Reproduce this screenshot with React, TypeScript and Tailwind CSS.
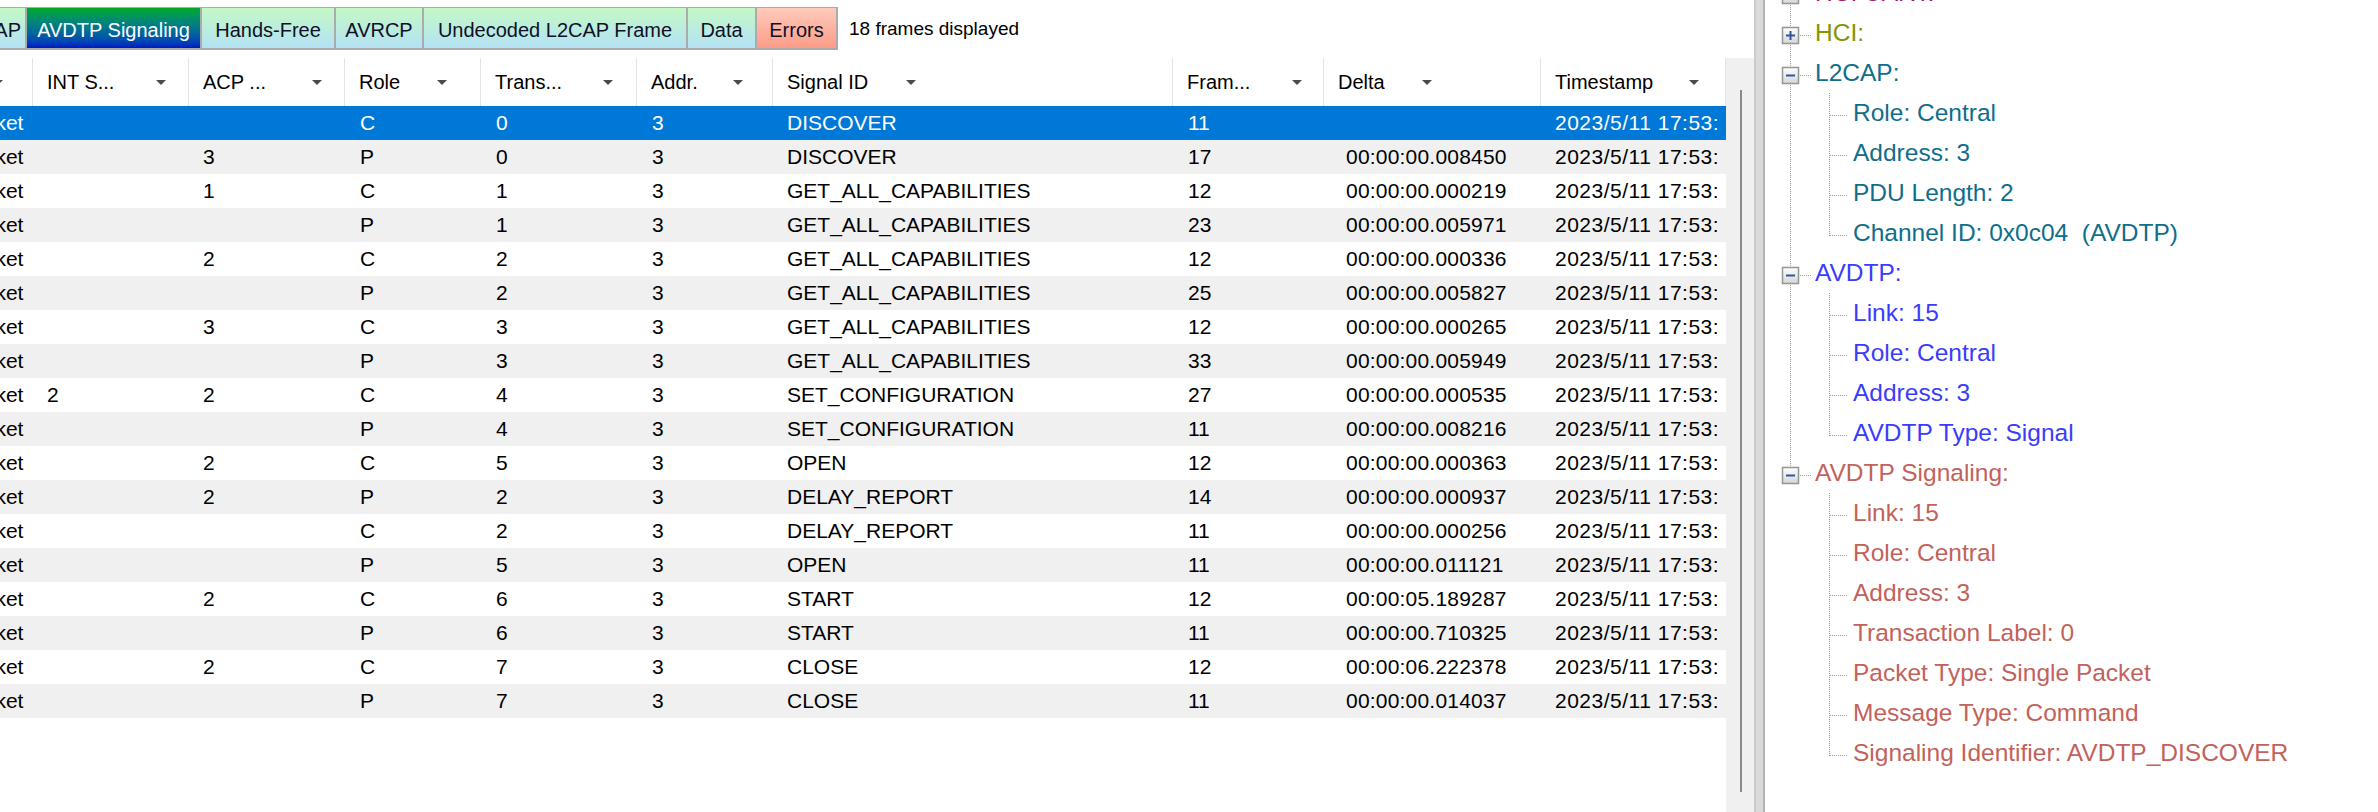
import React from "react"

const FONT = "font-['Liberation_Sans',Arial,sans-serif]"
const GRID = "grid grid-cols-[152px_156px_156px_136px_156px_136px_400px_151px_217px_185px]"

interface Tab {
  label: string
  w: string
  kind: "normal" | "active" | "error"
  align?: string
}

const tabs: Tab[] = [
  { label: "L2CAP", w: "w-[81px]", kind: "normal", align: "text-right pr-[4px]" },
  { label: "AVDTP Signaling", w: "w-[173px]", kind: "active" },
  { label: "Hands-Free", w: "w-[132px]", kind: "normal" },
  { label: "AVRCP", w: "w-[86px]", kind: "normal" },
  { label: "Undecoded L2CAP Frame", w: "w-[262px]", kind: "normal" },
  { label: "Data", w: "w-[67px]", kind: "normal" },
  { label: "Errors", w: "w-[79px]", kind: "error" },
]

const tabStyle = {
  normal: "bg-linear-to-b from-[#c4f8c4] to-[#b4e2f4] text-[#101028]",
  active: "bg-linear-to-b from-[#00a81c] to-[#0012c6] text-white",
  error: "bg-linear-to-b from-[#ffcabb] to-[#fb9c88] text-[#101028]",
}

const headers = [
  { label: "Pac...", mr: "mr-[29px]" },
  { label: "INT S...", mr: "mr-[22px]" },
  { label: "ACP ...", mr: "mr-[22px]" },
  { label: "Role", mr: "mr-[33px]" },
  { label: "Trans...", mr: "mr-[23px]" },
  { label: "Addr.", mr: "mr-[29px]" },
  { label: "Signal ID", mr: "mr-[256px]" },
  { label: "Fram...", mr: "mr-[21px]" },
  { label: "Delta", mr: "mr-[108px]" },
  { label: "Timestamp", mr: "mr-[26px]" },
]

const cellPad = [
  "pl-[14px]",
  "pl-[14px]",
  "pl-[14px]",
  "pl-[15px]",
  "pl-[15px]",
  "pl-[15px]",
  "pl-[14px]",
  "pl-[15px]",
  "pl-[22px] tracking-[0.2px]",
  "pl-[14px] tracking-[0.5px]",
]

// int, acp, role, trans, addr, signal, frame, delta
const rows: string[][] = [
  ["", "", "C", "0", "3", "DISCOVER", "11", ""],
  ["", "3", "P", "0", "3", "DISCOVER", "17", "00:00:00.008450"],
  ["", "1", "C", "1", "3", "GET_ALL_CAPABILITIES", "12", "00:00:00.000219"],
  ["", "", "P", "1", "3", "GET_ALL_CAPABILITIES", "23", "00:00:00.005971"],
  ["", "2", "C", "2", "3", "GET_ALL_CAPABILITIES", "12", "00:00:00.000336"],
  ["", "", "P", "2", "3", "GET_ALL_CAPABILITIES", "25", "00:00:00.005827"],
  ["", "3", "C", "3", "3", "GET_ALL_CAPABILITIES", "12", "00:00:00.000265"],
  ["", "", "P", "3", "3", "GET_ALL_CAPABILITIES", "33", "00:00:00.005949"],
  ["2", "2", "C", "4", "3", "SET_CONFIGURATION", "27", "00:00:00.000535"],
  ["", "", "P", "4", "3", "SET_CONFIGURATION", "11", "00:00:00.008216"],
  ["", "2", "C", "5", "3", "OPEN", "12", "00:00:00.000363"],
  ["", "2", "P", "2", "3", "DELAY_REPORT", "14", "00:00:00.000937"],
  ["", "", "C", "2", "3", "DELAY_REPORT", "11", "00:00:00.000256"],
  ["", "", "P", "5", "3", "OPEN", "11", "00:00:00.011121"],
  ["", "2", "C", "6", "3", "START", "12", "00:00:05.189287"],
  ["", "", "P", "6", "3", "START", "11", "00:00:00.710325"],
  ["", "2", "C", "7", "3", "CLOSE", "12", "00:00:06.222378"],
  ["", "", "P", "7", "3", "CLOSE", "11", "00:00:00.014037"],
]

interface TreeNode {
  text: string
  color: string
  level: 0 | 1
  box?: "plus" | "minus"
  last?: boolean
  groupLast?: boolean
}

const MAGENTA = "text-[#a3165f]"
const OLIVE = "text-[#859500]"
const TEAL = "text-[#0f6e8b]"
const BLUE = "text-[#3a3cfc]"
const SALMON = "text-[#c2625a]"

const tree: TreeNode[] = [
  { text: "HCI UART:", color: MAGENTA, level: 0, box: "minus" },
  { text: "HCI:", color: OLIVE, level: 0, box: "plus" },
  { text: "L2CAP:", color: TEAL, level: 0, box: "minus" },
  { text: "Role: Central", color: TEAL, level: 1 },
  { text: "Address: 3", color: TEAL, level: 1 },
  { text: "PDU Length: 2", color: TEAL, level: 1 },
  { text: "Channel ID: 0x0c04  (AVDTP)", color: TEAL, level: 1, last: true },
  { text: "AVDTP:", color: BLUE, level: 0, box: "minus" },
  { text: "Link: 15", color: BLUE, level: 1 },
  { text: "Role: Central", color: BLUE, level: 1 },
  { text: "Address: 3", color: BLUE, level: 1 },
  { text: "AVDTP Type: Signal", color: BLUE, level: 1, last: true },
  { text: "AVDTP Signaling:", color: SALMON, level: 0, box: "minus", last: true },
  { text: "Link: 15", color: SALMON, level: 1, groupLast: true },
  { text: "Role: Central", color: SALMON, level: 1, groupLast: true },
  { text: "Address: 3", color: SALMON, level: 1, groupLast: true },
  { text: "Transaction Label: 0", color: SALMON, level: 1, groupLast: true },
  { text: "Packet Type: Single Packet", color: SALMON, level: 1, groupLast: true },
  { text: "Message Type: Command", color: SALMON, level: 1, groupLast: true },
  { text: "Signaling Identifier: AVDTP_DISCOVER", color: SALMON, level: 1, groupLast: true, last: true },
]

const DOT = { stroke: "#9a9a9a", strokeDasharray: "1 1", strokeWidth: 1 }

function Gutter({ node, id }: { node: TreeNode; id: string }) {
  if (node.level === 0) {
    return (
      <svg width={50} height={40} className="shrink-0">
        <defs>
          <linearGradient id={id} x1="0" y1="0" x2="0" y2="1">
            <stop offset="0" stopColor="#ffffff" />
            <stop offset="1" stopColor="#d6d6d6" />
          </linearGradient>
        </defs>
        <line x1={25.5} y1={0} x2={25.5} y2={node.last ? 14 : 40} {...DOT} />
        <line x1={35} y1={22.5} x2={47} y2={22.5} {...DOT} />
        <rect x={17.5} y={14.5} width={16} height={16} fill={`url(#${id})`} stroke="#959595" strokeWidth={1.5} />
        <line x1={21} y1={22.5} x2={30} y2={22.5} stroke="#34539c" strokeWidth={2} />
        {node.box === "plus" && <line x1={25.5} y1={18} x2={25.5} y2={27} stroke="#34539c" strokeWidth={2} />}
      </svg>
    )
  }
  return (
    <svg width={88} height={40} className="shrink-0">
      {!node.groupLast && <line x1={25.5} y1={0} x2={25.5} y2={40} {...DOT} />}
      <line x1={64.5} y1={0} x2={64.5} y2={node.last ? 23 : 40} {...DOT} />
      <line x1={65} y1={22.5} x2={83} y2={22.5} {...DOT} />
    </svg>
  )
}

function Arrow({ mr }: { mr: string }) {
  return (
    <svg width={10} height={5} className={`ml-auto shrink-0 ${mr}`}>
      <polygon points="0,0 10,0 5,5" fill="#4a4a4a" />
    </svg>
  )
}

export default function App() {
  return (
    <div className={`flex h-[812px] w-[2378px] overflow-hidden bg-white ${FONT}`}>
      {/* frame list */}
      <div className="flex w-[1754px] shrink-0 flex-col">
        <div className="flex h-[58px] shrink-0 items-start overflow-hidden pt-[7px]">
          <div className="-ml-[56px] flex gap-[2px] bg-[#ababab] pt-px pr-[2px] pb-[2px]">
            {tabs.map((t) => (
              <div
                key={t.label}
                className={`${t.w} ${tabStyle[t.kind]} ${t.align ?? "text-center"} h-[40px] overflow-hidden whitespace-nowrap text-[20px] leading-[44px]`}
              >
                {t.label}
              </div>
            ))}
          </div>
          <div className="ml-[11px] h-[44px] whitespace-nowrap text-[19px] leading-[44px] text-black">18 frames displayed</div>
        </div>

        <div className="flex min-h-0 flex-1">
          <div className="w-[1726px] overflow-hidden">
            <div className={`${GRID} -ml-[119px] h-[48px] text-[20px] text-black`}>
              {headers.map((h, i) => (
                <div key={i} className="flex items-center overflow-hidden border-r border-[#e3e3e3] pl-[14px] whitespace-nowrap">
                  <span>{h.label}</span>
                  <Arrow mr={h.mr} />
                </div>
              ))}
            </div>
            {rows.map((r, i) => {
              const sel = i === 0
              const bg = sel ? "bg-[#0078d7] text-white" : i % 2 ? "bg-[#f0f0f0] text-black" : "bg-white text-black"
              const cells = ["Single Packet", ...r, "2023/5/11 17:53:"]
              return (
                <div key={i} className={`${GRID} -ml-[119px] h-[34px] text-[21px] leading-[34px] ${bg}`}>
                  {cells.map((c, j) => (
                    <div key={j} className={`overflow-hidden whitespace-nowrap ${cellPad[j]}`}>
                      {c}
                    </div>
                  ))}
                </div>
              )
            })}
          </div>
          <div className="w-[28px] shrink-0 bg-[#f0f0f0] pt-[32px] pb-[20px] pl-[14px]">
            <div className="h-full w-[2px] bg-[#8a8a8a]" />
          </div>
        </div>
      </div>

      {/* splitter */}
      <div className="w-[11px] shrink-0 border-x-2 border-l-[#cbcbcb] border-r-[#b3b3b3] bg-[#dadada]" />

      {/* decode tree */}
      <div className="min-w-0 flex-1 overflow-hidden">
        <div className="-mt-[27px] flex flex-col">
          {tree.map((n, i) => (
            <div key={i} className="flex h-[40px] items-center">
              <Gutter node={n} id={`bx${i}`} />
              <span className={`whitespace-pre text-[24.5px] leading-[40px] ${n.color}`}>{n.text}</span>
            </div>
          ))}
        </div>
      </div>
    </div>
  )
}
